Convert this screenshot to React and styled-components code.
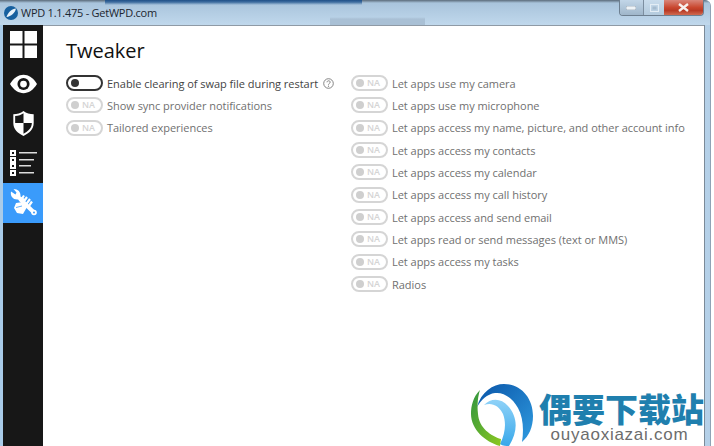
import React from 'react';
import styled, { createGlobalStyle } from 'styled-components';

const Global = createGlobalStyle`
  html, body { margin: 0; padding: 0; background: #fff; }
  #root { width: 714px; height: 446px; overflow: hidden; }
`;
const Win = styled.div`
  width: 710px; height: 446px; display: flex; flex-direction: column; position: relative;
  background: linear-gradient(90deg, #a9cbe8 0, #bcd6ec 45%, #c6dcf0 70%, #b4d0e8 100%);
  font-family: "Open Sans", "Liberation Sans", sans-serif; overflow: hidden;
  border-top-right-radius: 6px; border-right: 1px solid #8fa3b5;
`;
const TitleBar = styled.div`
  height: 25px; flex: none; display: flex; align-items: center; padding: 0 0 0 3px; position: relative;
  background:
    linear-gradient(180deg, #1f4f86 0, #3d6c9f 2px, transparent 5px) 105px 0 / 257px 100% no-repeat,
    linear-gradient(180deg, transparent 17px, #a9c0d5 19px, #a9c0d5 25px) 330px 0 / 95px 100% no-repeat,
    linear-gradient(180deg, #5b6b7a 0, #a9c4dc 3px, #c0d8ec 100%);
`;
const TitleText = styled.span`
  font-size: 11px; color: #1c2630; margin-left: 2px; letter-spacing: -0.25px;
`;
const WinButtons = styled.div`
  position: absolute; right: 6px; top: 0; width: 85px; height: 16px; display: flex; box-sizing: border-box;
  border: 1px solid #6d7f90; border-top: none; border-radius: 0 0 4px 4px; overflow: hidden;
`;
const WinBtn = styled.div`
  display: flex; align-items: center; justify-content: center;
  width: ${p => p.$w}px; height: 100%;
  background: ${p => p.$bg};
  border-right: ${p => p.$sep ? '1px solid #7c8ea0' : 'none'};
`;
const Main = styled.div`
  flex: 1; display: flex; margin: 0 5px 0 3px; min-height: 0; border-right: 1px solid #7b8a98;
`;
const Side = styled.nav`
  width: 40px; flex: none; background: #171717; display: flex; flex-direction: column;
`;
const SideItem = styled.div`
  height: 39.5px; flex: none; display: flex; align-items: center; justify-content: center;
  background: ${p => p.$active ? '#3a9bfb' : 'transparent'};
`;
const Content = styled.main`
  flex: 1; background: #fff; padding: 11px 0 0 23px; border-top: 1px solid #8f9aa5; position: relative;
`;
const Heading = styled.h1`
  margin: 0 0 7px; font-weight: 400; font-size: 20px; line-height: 28px; color: #111;
`;
const Columns = styled.div`
  display: flex;
`;
const Col = styled.div`
  display: flex; flex-direction: column; width: ${p => p.$w}px;
`;
const Row = styled.div`
  height: 22.33px; display: flex; align-items: center; gap: 4px;
`;
const Toggle = styled.div`
  box-sizing: border-box; width: 37px; height: 16px; border-radius: 8px; flex: none;
  border: 2px solid ${p => p.$on ? '#333' : '#d5d5d5'};
  display: flex; align-items: center; padding-left: 3px; gap: 3px;
`;
const Knob = styled.span`
  width: 8px; height: 8px; border-radius: 50%; background: ${p => p.$on ? '#333' : '#cfcfcf'};
`;
const Na = styled.span`
  font-size: 9px; font-weight: 600; color: #d4d4d4; line-height: 12px;
`;
const Label = styled.span`
  font-size: 11px; color: ${p => p.$on ? '#444' : '#707070'}; white-space: nowrap; letter-spacing: -0.03px;
`;
const Help = styled.svg`
  width: 11px; height: 11px; margin-left: 1px; flex: none;
`;
const Brand = styled.div`
  position: absolute; right: 0; bottom: 0; left: 428px; height: 62px; display: flex; align-items: flex-start;
`;
const BrandText = styled.div`
  display: flex; flex-direction: column; align-items: center; margin-left: 6px; margin-top: 9px; gap: 3px;
`;
const BrandCn = styled.div`
  font-family: "Noto Sans CJK SC", sans-serif; font-weight: 900; font-size: 33px; line-height: 31px; color: #1f7fae; white-space: nowrap;
`;
const BrandEn = styled.div`
  font-family: "Liberation Sans", sans-serif; font-size: 17px; line-height: 16px; color: #6c6c6c; letter-spacing: .75px; margin-right: 4px;
`;

const Grid = () => (
  <svg width="27" height="27" viewBox="0 0 27 27" fill="#fff">
    <rect x="0" y="0" width="12.500" height="12.500" /><rect x="14.500" y="0" width="12.500" height="12.500" />
    <rect x="0" y="14.500" width="12.500" height="12.500" /><rect x="14.500" y="14.500" width="12.500" height="12.500" />
  </svg>
);
const Eye = () => (
  <svg width="27" height="20" viewBox="0 0 28 20">
    <path d="M0 10C4 3.500 9 .5 14 .5S24 3.500 28 10c-4 6.500-9 9.500-14 9.500S4 16.500 0 10Z" fill="#fff" />
    <circle cx="14" cy="10" r="6.300" fill="#171717" />
    <circle cx="14" cy="10" r="3.500" fill="#fff" />
  </svg>
);
const Shield = () => (
  <svg width="23" height="25" viewBox="0 0 22 27">
    <path d="M11 0C8 2.500 4 3.500 0 3.500V13c0 6.500 4.500 11 11 14 6.500-3 11-7.500 11-14V3.500C18 3.500 14 2.500 11 0Z" fill="#fff" />
    <path d="M11 2.500C8.500 4.300 5.500 5.300 2 5.500V13h9ZM11 13v11.500c5-2.500 9-6 9-11.500Z" fill="#171717" />
  </svg>
);
const ListIcon = () => (
  <svg width="27" height="26" viewBox="0 0 27 26">
    {[[0, 19], [7, 15], [13, 12], [20, 15]].map(([y, w]) => (
      <g key={y}>
        <rect x="0" y={y} width="6" height="6" fill="#fff" />
        <rect x="2" y={y + 2} width="2" height="2" fill="#171717" />
        <rect x="9" y={y + 2} width={w} height="1.500" fill="#ddd" />
      </g>
    ))}
  </svg>
);
const Wrench = () => (
  <svg width="27" height="27" viewBox="0 0 27 27">
    <path d="M1 2.500 C0 7 3 11 8 10.500 L12 14 L15 10 L10.500 7.500 C11 3 8 0 3.500 0 L6.500 3.500 L5.500 5.500 Z" fill="#fff" />
    <path d="M10 10 L24 23.500" stroke="#fff" strokeWidth="4" />
    <path d="M14 6.500 L11 11 M17 8 L13.500 13 M20 10 L16 15.500 M22 12.500 L18.500 17.500" stroke="#fff" strokeWidth="2.200" />
    <path d="M6 14 L13 13 L17 18 L13 25 L7 24 L4 19 Z" fill="#fff" />
    <path d="M6 18.500 L12 17" stroke="#3a9bfb" strokeWidth=".8" />
    <circle cx="24" cy="23.500" r="2.800" fill="#fff" />
    <circle cx="24" cy="23.500" r="1" fill="#3a9bfb" />
  </svg>
);
const Logo = () => (
  <svg width="62" height="62" viewBox="0 0 62 62">
    <defs>
      <linearGradient id="lb" x1="0" y1="0" x2="1" y2="1"><stop offset="0" stopColor="#0a55a8" /><stop offset="1" stopColor="#2f9be0" /></linearGradient>
      <linearGradient id="lg" x1="0" y1="0" x2="1" y2="1"><stop offset="0" stopColor="#2f9440" /><stop offset="1" stopColor="#8cc820" /></linearGradient>
      <linearGradient id="lc" x1="0" y1="0" x2="0" y2="1"><stop offset="0" stopColor="#8fd2f8" /><stop offset="1" stopColor="#38a8ea" /></linearGradient>
    </defs>
    <path d="M6 23C10 8 22 0 33 0 50 0 62 14 62 32 62 43 58 52 51 58 53 45 52 33 47 24 41 13 32 8 24 9 16 10 10 16 6 23Z" fill="url(#lb)" />
    <path d="M13 21C20 14 30 14 37 22 46 32 48 46 38 62 35 62 32 62 29 60 35 48 35 38 32 30 28 21 20 18 13 21Z" fill="url(#lc)" />
    <path d="M9 6C2 13 0 22 0 30 0 45 14 58 29 62L30 55C20 52 8 44 7 30 6 20 7 12 9 6Z" fill="url(#lg)" />
  </svg>
);

const left = ['Show sync provider notifications', 'Tailored experiences'];
const right = [
  'Let apps use my camera', 'Let apps use my microphone', 'Let apps access my name, picture, and other account info',
  'Let apps access my contacts', 'Let apps access my calendar', 'Let apps access my call history',
  'Let apps access and send email', 'Let apps read or send messages (text or MMS)', 'Let apps access my tasks', 'Radios',
];

const NaRow = ({ text }) => (
  <Row>
    <Toggle><Knob /><Na>NA</Na></Toggle>
    <Label>{text}</Label>
  </Row>
);

export default function App() {
  return (
    <Win>
      <Global />
      <TitleBar>
        <svg width="16" height="16" viewBox="0 0 16 16">
          <circle cx="8" cy="8" r="7" fill="#17609f" />
          <path d="M3.500 12 C5 7 9 4 13 3.500 C12 8 8 11.500 3.500 12Z" fill="#e8f2fa" />
        </svg>
        <TitleText>WPD 1.1.475 - GetWPD.com</TitleText>
        <WinButtons>
          <WinBtn $w={23} $sep $bg="linear-gradient(180deg,#c2d6e8,#9fb6ca)">
            <svg width="10" height="4"><rect width="10" height="4" rx="1" fill="#eef3f7" stroke="#6f7f8e" strokeWidth=".5" /></svg>
          </WinBtn>
          <WinBtn $w={21} $bg="linear-gradient(180deg,#c9dcec,#b3cadd)">
            <svg width="9" height="8"><rect x=".5" y=".5" width="8" height="7" fill="none" stroke="#e3edf5" /><rect x="2.500" y="2.500" width="4" height="3" fill="#a6bccf" /></svg>
          </WinBtn>
          <WinBtn $w={39} $bg="linear-gradient(180deg,#d9867a 0,#c9472f 50%,#b83a25 70%,#d06a50 100%)">
            <svg width="11" height="9"><path d="M1 1 L10 8 M10 1 L1 8" stroke="#f7f1ee" strokeWidth="2.400" /></svg>
          </WinBtn>
        </WinButtons>
      </TitleBar>
      <Main>
        <Side>
          <SideItem><Grid /></SideItem>
          <SideItem><Eye /></SideItem>
          <SideItem><Shield /></SideItem>
          <SideItem><ListIcon /></SideItem>
          <SideItem $active><Wrench /></SideItem>
        </Side>
        <Content>
          <Heading>Tweaker</Heading>
          <Columns>
            <Col $w={285}>
              <Row>
                <Toggle $on><Knob $on /></Toggle>
                <Label $on>Enable clearing of swap file during restart</Label>
                <Help viewBox="0 0 11 11">
                  <circle cx="5.500" cy="5.500" r="4.800" fill="none" stroke="#777" strokeWidth=".9" />
                  <path d="M4 4.300c0-2 3.200-2 3.200-.1 0 1.200-1.700 1.200-1.700 2.500" fill="none" stroke="#777" strokeWidth=".9" />
                  <circle cx="5.500" cy="8.200" r=".6" fill="#777" />
                </Help>
              </Row>
              {left.map(t => <NaRow key={t} text={t} />)}
            </Col>
            <Col $w={340}>
              {right.map(t => <NaRow key={t} text={t} />)}
            </Col>
          </Columns>
          <Brand>
            <Logo />
            <BrandText>
              <BrandCn>偶要下载站</BrandCn>
              <BrandEn>ouyaoxiazai.com</BrandEn>
            </BrandText>
          </Brand>
        </Content>
      </Main>
    </Win>
  );
}
